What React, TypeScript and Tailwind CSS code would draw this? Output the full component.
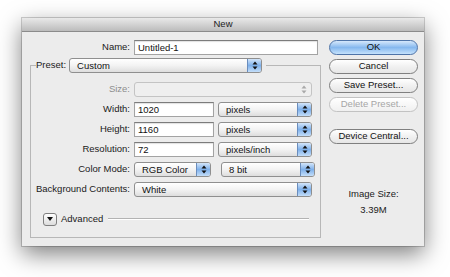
import React from 'react';

const FONT = { fontFamily: '"Liberation Sans", Arial, sans-serif' };

function Arrows({ color = '#111' }: { color?: string }) {
  return (
    <svg width="6" height="9" viewBox="0 0 6 9">
      <path d="M3 0.5 L5.5 3.5 L0.5 3.5 Z" fill={color} />
      <path d="M3 8.5 L5.5 5.5 L0.5 5.5 Z" fill={color} />
    </svg>
  );
}

function PopUp({ value, width, disabled }: { value: string; width: string; disabled?: boolean }) {
  return (
    <div
      className={`flex h-[15px] ${width} items-stretch overflow-hidden rounded-[3px] border ${
        disabled ? 'border-[#c4c4c4] bg-[#efefef]' : 'border-[#8f8f8f] bg-gradient-to-b from-white via-[#f3f3f3] to-[#dedede]'
      }`}
    >
      <span className="flex-1 truncate pl-[7px] text-[9.5px] leading-[13px] text-[#111]">{value}</span>
      {disabled ? (
        <span className="flex w-[14px] items-center justify-center">
          <Arrows color="#a9a9a9" />
        </span>
      ) : (
        <span className="flex w-[14px] items-center justify-center border-l border-[#6a8dbd] bg-gradient-to-b from-[#d3e5f9] via-[#7eb0ea] to-[#c4def9]">
          <Arrows />
        </span>
      )}
    </div>
  );
}

function TextField({ value, width }: { value: string; width: string }) {
  return (
    <div className={`h-[15px] ${width} border border-[#a3a3a3] border-t-[#7c7c7c] bg-white pl-[3px] text-[9.5px] leading-[13px] text-[#111] shadow-[inset_0_1px_1px_rgba(0,0,0,0.12)]`}>
      {value}
    </div>
  );
}

function Button({ label, primary, disabled }: { label: string; primary?: boolean; disabled?: boolean }) {
  const look = primary
    ? 'border-[#4f74a8] bg-gradient-to-b from-[#d6e8fb] via-[#86b8ee] to-[#c5e2fc] text-[#111]'
    : disabled
      ? 'border-[#c2c2c2] bg-gradient-to-b from-white to-[#f0f0f0] text-[#a6a6a6]'
      : 'border-[#7f7f7f] bg-gradient-to-b from-white via-[#f1f1f1] to-[#e6e6e6] text-[#111]';
  return (
    <div className={`flex h-[15px] items-center justify-center rounded-full border text-[9.5px] ${look}`}>
      {label}
    </div>
  );
}

function Row({ label, children, dim }: { label: string; children: React.ReactNode; dim?: boolean }) {
  return (
    <div className="flex h-[15px] items-center gap-[4px]">
      <span className={`w-[99px] whitespace-nowrap text-right text-[9.5px] ${dim ? 'text-[#8d8d8d]' : 'text-[#1a1a1a]'}`}>{label}</span>
      {children}
    </div>
  );
}

export default function App() {
  return (
    <div className="h-[277px] w-[450px] bg-white pl-[22px] pt-[18px]" style={FONT}>
      <div className="flex h-[228px] w-[402px] flex-col bg-[#ececec] shadow-[0_8px_22px_rgba(0,0,0,0.5),0_0_0_1px_rgba(0,0,0,0.18)]">
        {/* Title bar */}
        <div className="flex h-[14px] items-center justify-center border-b border-[#8b8b8b] bg-gradient-to-b from-[#e9e9e9] to-[#bcbcbc] text-[9.5px] text-[#222]">
          New
        </div>

        <div className="flex pt-[8px]">
          {/* Left column */}
          <div className="w-[296px]">
            <div className="flex h-[15px] items-center gap-[4px]">
              <span className="w-[108px] text-right text-[9.5px] text-[#1a1a1a]">Name:</span>
              <TextField value="Untitled-1" width="w-[184px]" />
            </div>

            <fieldset className="ml-[8px] mt-[3px] w-[288px] border border-[#b7b7b7] pb-[11px] pr-[5px]">
              <legend className="ml-[5px] flex items-center gap-[3px] pr-[4px]">
                <span className="text-[9.5px] text-[#1a1a1a]">Preset:</span>
                <PopUp value="Custom" width="w-[193px]" />
              </legend>

              <div className="flex flex-col gap-[5px] pt-[9px]">
                <Row label="Size:" dim>
                  <PopUp value="" width="w-[178px]" disabled />
                </Row>
                <Row label="Width:">
                  <TextField value="1020" width="w-[80px]" />
                  <PopUp value="pixels" width="w-[94px]" />
                </Row>
                <Row label="Height:">
                  <TextField value="1160" width="w-[80px]" />
                  <PopUp value="pixels" width="w-[94px]" />
                </Row>
                <Row label="Resolution:">
                  <TextField value="72" width="w-[80px]" />
                  <PopUp value="pixels/inch" width="w-[94px]" />
                </Row>
                <Row label="Color Mode:">
                  <PopUp value="RGB Color" width="w-[77px]" />
                  <span className="w-[2px]" />
                  <PopUp value="8 bit" width="w-[94px]" />
                </Row>
                <Row label="Background Contents:">
                  <PopUp value="White" width="w-[178px]" />
                </Row>
              </div>

              <div className="mt-[15px] flex h-[14px] items-center pl-[12px] pr-[6px]">
                <span className="flex h-[13px] w-[14px] items-center justify-center rounded-[3px] border border-[#7f7f7f] bg-gradient-to-b from-white to-[#dcdcdc]">
                  <svg width="6" height="4" viewBox="0 0 6 4">
                    <path d="M0 0 L6 0 L3 4 Z" fill="#111" />
                  </svg>
                </span>
                <span className="ml-[4px] text-[9.5px] text-[#1a1a1a]">Advanced</span>
                <span className="ml-[5px] h-[2px] flex-1 border-t border-b border-t-[#b3b3b3] border-b-white" />
              </div>
            </fieldset>
          </div>

          {/* Right column */}
          <div className="ml-[11px] flex w-[89px] flex-col">
            <div className="flex flex-col gap-[4px]">
              <Button label="OK" primary />
              <Button label="Cancel" />
              <Button label="Save Preset..." />
              <Button label="Delete Preset..." disabled />
            </div>
            <div className="mt-[17px]">
              <Button label="Device Central..." />
            </div>
            <div className="mt-[44px] text-center text-[9.5px] leading-[12px] text-[#1a1a1a]">Image Size:</div>
            <div className="mt-[4px] text-center text-[9.5px] leading-[12px] text-[#1a1a1a]">3.39M</div>
          </div>
        </div>
      </div>
    </div>
  );
}
